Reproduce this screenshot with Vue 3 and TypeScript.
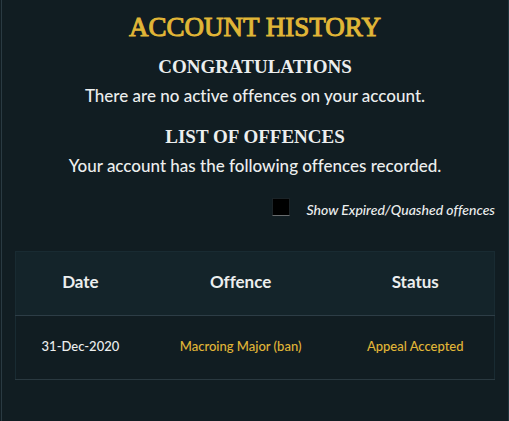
<script setup lang="ts">
import { computed, ref } from 'vue'

interface Offence {
  date: string
  name: string
  status: string
  expired: boolean
}

const showExpired = ref(false)

const offences: Offence[] = [
  { date: '31-Dec-2020', name: 'Macroing Major (ban)', status: 'Appeal Accepted', expired: false },
]

const visibleOffences = computed(() =>
  offences.filter((offence) => showExpired.value || !offence.expired),
)
</script>

<template>
  <main class="panel">
    <h1>ACCOUNT HISTORY</h1>

    <section>
      <h2>CONGRATULATIONS</h2>
      <p>There are no active offences on your account.</p>
    </section>

    <section>
      <h2>LIST OF OFFENCES</h2>
      <p>Your account has the following offences recorded.</p>
    </section>

    <div class="filter">
      <input id="show-expired" v-model="showExpired" type="checkbox" />
      <label for="show-expired">Show Expired/Quashed offences</label>
    </div>

    <table>
      <thead>
        <tr>
          <th class="date" scope="col">Date</th>
          <th class="offence" scope="col">Offence</th>
          <th class="status" scope="col">Status</th>
        </tr>
      </thead>
      <tbody>
        <tr v-for="offence in visibleOffences" :key="offence.date + offence.name">
          <td>{{ offence.date }}</td>
          <td><a href="#">{{ offence.name }}</a></td>
          <td><a href="#">{{ offence.status }}</a></td>
        </tr>
      </tbody>
    </table>
  </main>
</template>

<style>
body {
  background: #111d22;
}
</style>

<style scoped>
.panel {
  box-sizing: border-box;
  min-height: 100vh;
  margin-left: 1px;
  padding: 12px 13px 40px;
  border-left: 1px solid #2a3a42;
  border-right: 1px solid #1f343c;
  background: #111d22;
  color: #eceeee;
  font-family: Lato, "Open Sans", sans-serif;
  font-size: 17px;
  font-variant-ligatures: none;
  line-height: 24px;
  text-align: center;
}

h1,
h2 {
  margin: 0;
  font-family: "Liberation Serif", serif;
}

h1 {
  margin-bottom: 13px;
  color: #e1b637;
  font-size: 27px;
  font-weight: 400;
  line-height: 30px;
  -webkit-text-stroke: 1px #e1b637;
}

h2 {
  font-size: 19px;
  font-weight: 700;
  line-height: 24px;
}

p {
  margin: 5px 0 17px;
  font-weight: 500;
}

.filter {
  display: flex;
  align-items: flex-start;
  justify-content: flex-end;
  gap: 16px;
  margin-top: 20px;
  margin-bottom: 29px;
  font-size: 14px;
  font-style: italic;
  font-weight: 500;
}

.filter input {
  appearance: none;
  width: 18px;
  height: 18px;
  margin: 0;
  border: 1px solid #1b2327;
  border-bottom-color: #686c6e;
  background: #000;
}

.filter input:checked {
  background: #e1b637;
}

table {
  width: 100%;
  border: 1px solid #192b32;
  border-bottom-color: #2a3940;
  border-collapse: collapse;
  table-layout: fixed;
}

thead {
  background: #14242a;
}

th,
td {
  height: 64px;
  box-sizing: border-box;
  padding: 0 0 4px;
}

th {
  border-bottom: 1px solid #2d3d46;
  font-size: 17px;
  font-weight: 700;
}

td {
  font-size: 13px;
  font-weight: 500;
}

.date {
  width: 27%;
}

.offence {
  width: 40%;
}

.status {
  width: 33%;
}

a {
  color: #e1b637;
  text-decoration: none;
}
</style>
